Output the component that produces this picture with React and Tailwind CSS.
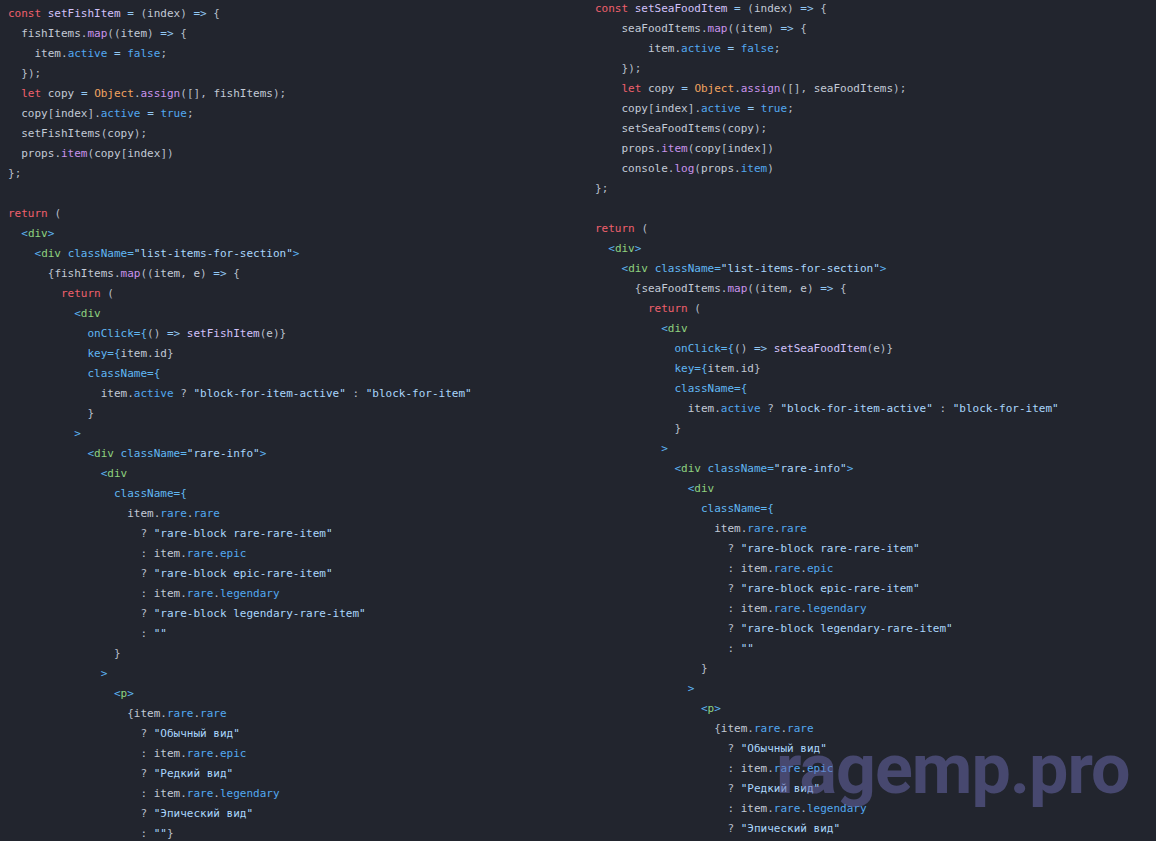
import React from "react";

const leftCode = `const setFishItem = (index) => {
  fishItems.map((item) => {
    item.active = false;
  });
  let copy = Object.assign([], fishItems);
  copy[index].active = true;
  setFishItems(copy);
  props.item(copy[index])
};

return (
  <div>
    <div className="list-items-for-section">
      {fishItems.map((item, e) => {
        return (
          <div
            onClick={() => setFishItem(e)}
            key={item.id}
            className={
              item.active ? "block-for-item-active" : "block-for-item"
            }
          >
            <div className="rare-info">
              <div
                className={
                  item.rare.rare
                    ? "rare-block rare-rare-item"
                    : item.rare.epic
                    ? "rare-block epic-rare-item"
                    : item.rare.legendary
                    ? "rare-block legendary-rare-item"
                    : ""
                }
              >
                <p>
                  {item.rare.rare
                    ? "Обычный вид"
                    : item.rare.epic
                    ? "Редкий вид"
                    : item.rare.legendary
                    ? "Эпический вид"
                    : ""}`;

const rightCode = `const setSeaFoodItem = (index) => {
    seaFoodItems.map((item) => {
        item.active = false;
    });
    let copy = Object.assign([], seaFoodItems);
    copy[index].active = true;
    setSeaFoodItems(copy);
    props.item(copy[index])
    console.log(props.item)
};

return (
  <div>
    <div className="list-items-for-section">
      {seaFoodItems.map((item, e) => {
        return (
          <div
            onClick={() => setSeaFoodItem(e)}
            key={item.id}
            className={
              item.active ? "block-for-item-active" : "block-for-item"
            }
          >
            <div className="rare-info">
              <div
                className={
                  item.rare.rare
                    ? "rare-block rare-rare-item"
                    : item.rare.epic
                    ? "rare-block epic-rare-item"
                    : item.rare.legendary
                    ? "rare-block legendary-rare-item"
                    : ""
                }
              >
                <p>
                  {item.rare.rare
                    ? "Обычный вид"
                    : item.rare.epic
                    ? "Редкий вид"
                    : item.rare.legendary
                    ? "Эпический вид"
                    : ""}`;

// token colours
const colors = {
  kw: "text-[#f0606c]",
  fn: "text-[#d2c2fa]",
  method: "text-[#c993ec]",
  cls: "text-[#f2a460]",
  prop: "text-[#52a8f0]",
  bool: "text-[#52a8f0]",
  ident: "text-[#c2cad6]",
  str: "text-[#aad6fc]",
  tag: "text-[#8fd27f]",
  bracket: "text-[#5eb4f2]",
  attr: "text-[#60b6f2]",
  op: "text-[#92c8f4]",
  punct: "text-[#b6bec9]",
};

const keywords = new Set(["const", "let", "return"]);
const fnNames = new Set(["setFishItem", "setSeaFoodItem"]);

function highlight(line) {
  const re = /(\s+)|("[^"]*")|([A-Za-z_$][\w$]*)|(=>|[=?:<>{}()\[\];,.])|(.)/g;
  const out = [];
  let prev = null;
  let prevType = null;
  let m;
  while ((m = re.exec(line))) {
    const t = m[0];
    const after = line.slice(re.lastIndex);
    let type = null;
    if (m[1]) type = null;
    else if (m[2]) type = "str";
    else if (m[3]) {
      if (keywords.has(t)) type = "kw";
      else if (t === "true" || t === "false") type = "bool";
      else if (t === "Object") type = "cls";
      else if (prev === "<") type = "tag";
      else if (prev === ".")
        type = after.startsWith("(") ? "method" : t === "id" ? "ident" : "prop";
      else if (fnNames.has(t)) type = "fn";
      else if (after.startsWith("=") && !after.startsWith("=>")) type = "attr";
      else type = "ident";
    } else if (m[4]) {
      if (t === "<" || t === ">") type = "bracket";
      else if (t === "=>") type = "op";
      else if (t === "=") type = prevType === "attr" ? "attr" : "op";
      else if (t === "{" && prevType === "attr") type = "attr";
      else type = "punct";
    } else type = "punct";
    out.push([t, type]);
    if (type) {
      prev = t;
      prevType = type;
    }
  }
  return out;
}

function CodeBlock({ code }) {
  return (
    <div>
      {code.split("\n").map((line, i) => (
        <div key={i} className="h-[20px] leading-[20px] whitespace-pre">
          {line === ""
            ? " "
            : highlight(line).map(([t, type], j) => (
                <span key={j} className={type ? colors[type] : ""}>
                  {t}
                </span>
              ))}
        </div>
      ))}
    </div>
  );
}

export default function App() {
  return (
    <div
      className="relative w-full h-[841px] overflow-hidden bg-[#22252e] text-[11px] text-[#c2cad6]"
      style={{ fontFamily: '"DejaVu Sans Mono", "Liberation Mono", monospace' }}
    >
      <div className="flex">
        {/* left snippet */}
        <div className="w-[595px] pl-[8px] pt-[4px] shrink-0">
          <CodeBlock code={leftCode} />
        </div>

        {/* right snippet */}
        <div className="flex-1 -mt-[1px]">
          <CodeBlock code={rightCode} />
        </div>
      </div>

      {/* watermark */}
      <div
        className="absolute left-[776px] top-[734px] text-[70px] font-bold leading-none tracking-[-1px] text-[#6b6bb0]/50 select-none"
        style={{ fontFamily: 'Roboto, "Liberation Sans", sans-serif' }}
      >
        ragemp.pro
      </div>
    </div>
  );
}
